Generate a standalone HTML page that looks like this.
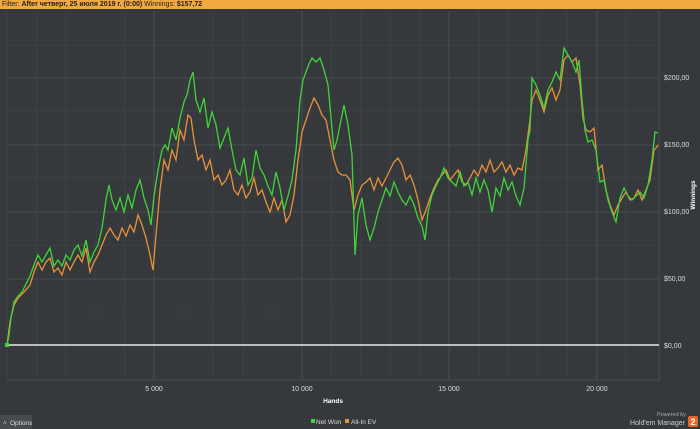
<!DOCTYPE html>
<html><head><meta charset="utf-8"><style>
html,body{margin:0;padding:0;width:700px;height:429px;overflow:hidden;background:#36393c;font-family:"Liberation Sans",sans-serif;}
.bar{position:absolute;left:0;top:0;width:700px;height:9px;background:#f2a840;font-size:7px;line-height:9px;color:#222;padding-left:2px;}
.bar b{font-weight:bold}
</style></head><body>
<div class="bar">Filter: <b>After четверг, 25 июля 2019 г. (0:00)</b> Winnings: <b>$157,72</b></div>
<svg width="700" height="429" style="position:absolute;left:0;top:0" xmlns="http://www.w3.org/2000/svg">
<g stroke="#42464a" stroke-width="0.6">
<line x1="7" y1="11" x2="7" y2="380"/>
<line x1="37" y1="11" x2="37" y2="380"/><line x1="66" y1="11" x2="66" y2="380"/><line x1="96" y1="11" x2="96" y2="380"/><line x1="125" y1="11" x2="125" y2="380"/>
<line x1="184" y1="11" x2="184" y2="380"/><line x1="213" y1="11" x2="213" y2="380"/><line x1="243" y1="11" x2="243" y2="380"/><line x1="272" y1="11" x2="272" y2="380"/>
<line x1="331" y1="11" x2="331" y2="380"/><line x1="361" y1="11" x2="361" y2="380"/><line x1="390" y1="11" x2="390" y2="380"/><line x1="420" y1="11" x2="420" y2="380"/>
<line x1="479" y1="11" x2="479" y2="380"/><line x1="508" y1="11" x2="508" y2="380"/><line x1="538" y1="11" x2="538" y2="380"/><line x1="567" y1="11" x2="567" y2="380"/>
<line x1="626" y1="11" x2="626" y2="380"/>
<line x1="7" y1="45" x2="659" y2="45"/><line x1="7" y1="111" x2="659" y2="111"/><line x1="7" y1="178" x2="659" y2="178"/><line x1="7" y1="245" x2="659" y2="245"/><line x1="7" y1="312" x2="659" y2="312"/>
</g>
<g stroke="#4e5256" stroke-width="0.8">
<line x1="154" y1="11" x2="154" y2="380"/><line x1="302" y1="11" x2="302" y2="380"/><line x1="449" y1="11" x2="449" y2="380"/><line x1="597" y1="11" x2="597" y2="380"/><line x1="659" y1="11" x2="659" y2="380"/>
<line x1="7" y1="78" x2="659" y2="78"/><line x1="7" y1="145" x2="659" y2="145"/><line x1="7" y1="212" x2="659" y2="212"/><line x1="7" y1="279" x2="659" y2="279"/><line x1="7" y1="380" x2="659" y2="380"/>
</g>
<line x1="7" y1="345" x2="659" y2="345" stroke="#e8e8e8" stroke-width="1.5"/>
<polyline fill="none" stroke="#e8913a" stroke-width="1.3" points="7,345 10,322 14,305 18,298 24,292 30,285 34,272 38,262 42,270 46,262 50,258 54,272 58,268 62,275 66,262 70,270 74,262 78,255 82,262 86,248 90,272 94,262 98,255 102,245 106,235 110,228 114,235 118,240 122,228 126,236 130,225 134,232 138,215 142,225 146,238 150,255 153,270 156,235 160,190 164,160 168,170 172,150 176,160 180,130 184,140 188,115 191,118 194,140 198,160 202,155 206,170 210,160 214,180 218,175 222,185 226,180 230,170 234,190 238,195 242,185 246,198 250,192 254,178 258,195 262,190 266,202 270,212 274,198 278,210 282,200 286,222 290,215 294,195 298,160 302,132 306,120 310,108 314,98 318,105 322,115 326,120 330,140 334,160 338,172 342,175 346,175 350,180 354,210 358,195 362,185 366,182 370,178 374,190 378,178 382,186 386,178 390,170 394,162 398,158 402,165 406,180 410,175 414,185 418,200 422,220 426,210 430,198 434,188 438,180 442,175 446,170 450,180 454,175 458,170 462,182 466,185 470,178 474,170 478,176 482,165 486,172 490,160 494,172 498,168 502,162 506,172 510,165 514,175 518,168 522,170 526,150 530,120 532,100 536,90 540,100 544,112 548,95 552,88 556,100 560,90 564,60 568,55 572,62 576,58 580,85 583,118 586,130 590,132 594,128 598,170 602,165 606,190 610,205 614,215 618,205 622,198 626,192 630,200 634,198 638,190 642,200 646,190 650,180 654,150 656,148 658,145"/>
<polyline fill="none" stroke="#3fd43a" stroke-width="1.3" points="7,345 9,335 11,318 14,302 18,296 22,292 26,284 30,276 34,265 38,255 42,262 46,255 50,248 54,266 58,260 62,266 66,255 70,260 74,250 78,245 82,256 86,240 90,262 94,252 98,245 102,228 106,200 109,185 112,200 116,210 120,198 124,212 128,195 132,208 136,190 140,180 144,198 148,210 151,225 154,196 158,170 162,150 165,145 168,150 172,128 176,140 180,118 184,102 187,95 190,80 193,72 196,100 200,112 204,98 208,128 212,112 216,125 220,148 224,138 228,128 232,150 236,170 240,175 244,158 248,185 252,178 256,150 260,168 264,175 268,186 272,195 276,172 280,188 284,210 288,196 292,180 296,150 300,100 303,80 306,72 309,64 312,58 316,62 320,58 324,70 328,85 331,118 334,150 337,140 341,120 344,105 348,125 352,155 355,255 358,215 362,198 366,225 370,240 374,228 378,212 382,200 386,188 390,196 394,182 398,192 402,200 406,205 410,196 414,205 418,218 422,226 425,240 428,212 432,195 436,186 440,178 444,168 448,178 452,182 456,186 460,172 464,186 468,182 472,195 476,178 480,192 484,180 488,190 492,212 496,188 500,196 504,178 508,190 512,182 516,196 520,205 524,188 528,140 530,130 532,78 536,85 540,95 544,108 548,90 552,82 556,72 560,80 564,48 568,55 572,62 576,72 579,60 582,100 585,130 588,142 592,140 596,150 600,182 604,180 608,200 612,212 616,222 620,198 624,188 628,196 632,200 636,196 640,192 644,198 648,185 652,160 655,132 658,133"/>
<rect x="5" y="343" width="4" height="4" fill="#3fd43a"/>
<g fill="#dcdcdc" font-size="7" font-family="Liberation Sans, sans-serif">
<text x="664" y="80">$200,00</text><text x="664" y="147">$150,00</text><text x="664" y="214">$100,00</text><text x="664" y="281">$50,00</text><text x="664" y="348">$0,00</text>
<text x="154" y="391" text-anchor="middle">5 000</text><text x="302" y="391" text-anchor="middle">10 000</text><text x="449" y="391" text-anchor="middle">15 000</text><text x="597" y="391" text-anchor="middle">20 000</text>
<text x="333" y="403" text-anchor="middle" font-weight="bold" fill="#fff" font-size="6.5">Hands</text>
<text transform="translate(695,195) rotate(-90)" text-anchor="middle" font-weight="bold" fill="#fff" font-size="6.5">Winnings</text>
<text x="316" y="424" font-size="6.5">Net Won</text><text x="351" y="424" font-size="6.5">All-In EV</text>
<text x="686" y="416" text-anchor="end" font-size="5.5" fill="#aaa">Powered by</text>
<text x="685" y="425" text-anchor="end" fill="#ccc">Hold'em Manager</text>
</g>
<rect x="311" y="419" width="4" height="4" fill="#3fd43a"/>
<rect x="345" y="419" width="4" height="4" fill="#e8913a"/>
<rect x="0" y="415" width="32" height="14" fill="#474a4e"/>
<text x="3" y="425" font-size="6" fill="#ccc" font-family="Liberation Sans, sans-serif">˄</text>
<text x="10" y="425" font-size="6.5" fill="#ddd" font-family="Liberation Sans, sans-serif">Options</text>
<rect x="688" y="416" width="10" height="11" rx="2" fill="#e8662a"/>
<text x="693" y="425" font-size="9" font-weight="bold" fill="#fff" text-anchor="middle" font-family="Liberation Sans, sans-serif">2</text>
</svg>
</body></html>
